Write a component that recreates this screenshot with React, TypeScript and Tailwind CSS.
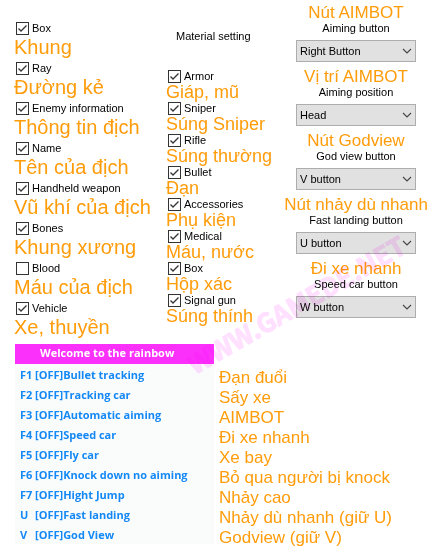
import { useId } from "react";

type Item = { label: string; note: string; checked?: boolean };

const esp: Item[] = [
  { label: "Box", note: "Khung", checked: true },
  { label: "Ray", note: "Đường kẻ", checked: true },
  { label: "Enemy information", note: "Thông tin địch", checked: true },
  { label: "Name", note: "Tên của địch", checked: true },
  { label: "Handheld weapon", note: "Vũ khí của địch", checked: true },
  { label: "Bones", note: "Khung xương", checked: true },
  { label: "Blood", note: "Máu của địch" },
  { label: "Vehicle", note: "Xe, thuyền", checked: true },
];

const materials: Item[] = [
  { label: "Armor", note: "Giáp, mũ", checked: true },
  { label: "Sniper", note: "Súng Sniper", checked: true },
  { label: "Rifle", note: "Súng thường", checked: true },
  { label: "Bullet", note: "Đạn", checked: true },
  { label: "Accessories", note: "Phụ kiện", checked: true },
  { label: "Medical", note: "Máu, nước", checked: true },
  { label: "Box", note: "Hộp xác", checked: true },
  { label: "Signal gun", note: "Súng thính", checked: true },
];

const keys = [
  { note: "Nút AIMBOT", label: "Aiming button", value: "Right Button" },
  { note: "Vị trí AIMBOT", label: "Aiming position", value: "Head" },
  { note: "Nút Godview", label: "God view button", value: "V button" },
  { note: "Nút nhảy dù nhanh", label: "Fast landing button", value: "U button" },
  { note: "Đi xe nhanh", label: "Speed car button", value: "W button" },
];

const hotkeys = [
  { key: "F1", name: "Bullet tracking", note: "Đạn đuổi" },
  { key: "F2", name: "Tracking car", note: "Sấy xe" },
  { key: "F3", name: "Automatic aiming", note: "AIMBOT" },
  { key: "F4", name: "Speed car", note: "Đi xe nhanh" },
  { key: "F5", name: "Fly car", note: "Xe bay" },
  { key: "F6", name: "Knock down no aiming", note: "Bỏ qua người bị knock" },
  { key: "F7", name: "Hight Jump", note: "Nhảy cao" },
  { key: "U", name: "Fast landing", note: "Nhảy dù nhanh (giữ U)" },
  { key: "V", name: "God View", note: "Godview (giữ V)" },
];

function Check({ label, checked }: { label: string; checked?: boolean }) {
  const id = useId();
  return (
    <div className="flex h-[14px] items-center gap-[3px]">
      <span className="grid shrink-0">
        <input
          id={id}
          type="checkbox"
          defaultChecked={checked}
          className="peer col-start-1 row-start-1 size-[13px] appearance-none border border-[#333] bg-white"
        />
        <svg
          viewBox="0 0 13 13"
          className="pointer-events-none col-start-1 row-start-1 hidden size-[13px] peer-checked:block"
          fill="none"
          stroke="#333"
          strokeWidth="1.3"
        >
          <path d="M2.5 6.5 5 9l5.5-5.5" />
        </svg>
      </span>
      <label htmlFor={id} className="text-[11px] leading-[14px] whitespace-nowrap">
        {label}
      </label>
    </div>
  );
}

function KeySelect({ note, label, value }: { note: string; label: string; value: string }) {
  const id = useId();
  return (
    <div className="flex h-16 flex-col items-center">
      <p className="text-[17px] leading-[18px] whitespace-nowrap text-[#ff9c0a]">{note}</p>
      <label htmlFor={id} className="text-[11px] leading-[12px] whitespace-nowrap">
        {label}
      </label>
      <div className="mt-[6px] grid w-full items-center">
        <select
          id={id}
          defaultValue={value}
          className="col-start-1 row-start-1 h-[22px] w-full appearance-none border border-[#adadad] bg-[#e1e1e1] pl-[3px] text-[11px] leading-[18px]"
        >
          <option>{value}</option>
        </select>
        <svg
          viewBox="0 0 10 6"
          className="pointer-events-none col-start-1 row-start-1 mr-1 h-[6px] w-[10px] justify-self-end"
          fill="none"
          stroke="#444"
          strokeWidth="1.1"
        >
          <path d="m1 1 4 4 4-4" />
        </svg>
      </div>
    </div>
  );
}

export default function App() {
  return (
    <main className="relative overflow-hidden bg-white font-['Liberation_Sans',Arial,sans-serif] text-black">
      <div className="grid grid-cols-[minmax(0,152fr)_minmax(0,128fr)_minmax(0,120fr)] px-4">
        <section className="pt-[21px]">
          {esp.map((item) => (
            <div key={item.label} className="h-10">
              <Check {...item} />
              <p className="-ml-[2px] text-[20px] leading-[24px] whitespace-nowrap text-[#ff9c0a]">{item.note}</p>
            </div>
          ))}
        </section>
        <section className="pt-[29px]">
          <h2 className="mb-[26px] pl-2 text-[11px] leading-[14px]">Material setting</h2>
          {materials.map((item) => (
            <div key={item.label} className="h-8">
              <Check {...item} />
              <p className="-ml-[2px] text-[18px] leading-[18px] whitespace-nowrap text-[#ff9c0a]">{item.note}</p>
            </div>
          ))}
        </section>
        <section className="pt-1">
          {keys.map((item) => (
            <KeySelect key={item.label} {...item} />
          ))}
        </section>
      </div>

      <section className="mt-[3px] grid grid-cols-[199fr_218fr] items-start pl-[15px]">
        <div className="bg-[#fafcfc] font-['Open_Sans','Noto_Sans',sans-serif] text-[11px] font-bold text-[#1488f5]">
          <h2 className="h-5 bg-[#fb30fb] pl-[25px] leading-[17px] text-white">Welcome to the rainbow</h2>
          <ul>
            {hotkeys.map((h) => (
              <li key={h.key} className="flex h-5 pl-[5px] leading-[22px] whitespace-nowrap">
                <span className="w-[15px]">{h.key}</span>
                <span>[OFF]{h.name}</span>
              </li>
            ))}
          </ul>
        </div>
        <ul className="pt-[24px] pl-[5px] text-[17px] leading-[20px] whitespace-nowrap text-[#ff9c0a]">
          {hotkeys.map((h) => (
            <li key={h.key}>{h.note}</li>
          ))}
        </ul>
      </section>

      <p className="pointer-events-none absolute top-[304px] left-[296px] -translate-x-1/2 -translate-y-1/2 -rotate-[30deg] font-['Noto_Sans_CJK_SC',sans-serif] text-[26px] leading-[34px] font-bold whitespace-nowrap text-[#ffe0ff] mix-blend-multiply [-webkit-text-stroke:1px_#ffe0ff]">
        WWW.GAMEDE.NET
      </p>
    </main>
  );
}
